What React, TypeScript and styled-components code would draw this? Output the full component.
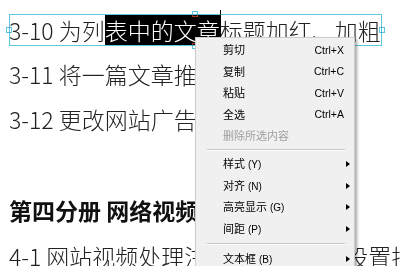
import styled, { createGlobalStyle } from "styled-components";

const GlobalStyle = createGlobalStyle`
  html, body {
    margin: 0;
    background: #ffffff;
  }
  body {
    font-family: "Noto Sans CJK SC", "Noto Sans", sans-serif;
  }
`;

type MenuEntry =
  | { kind: "item"; label: string; shortcut?: string; mnemonic?: string; submenu?: boolean; disabled?: boolean }
  | { kind: "separator" };

const menuEntries: MenuEntry[] = [
  { kind: "item", label: "剪切", shortcut: "Ctrl+X" },
  { kind: "item", label: "复制", shortcut: "Ctrl+C" },
  { kind: "item", label: "粘贴", shortcut: "Ctrl+V" },
  { kind: "item", label: "全选", shortcut: "Ctrl+A" },
  { kind: "item", label: "删除所选内容", disabled: true },
  { kind: "separator" },
  { kind: "item", label: "样式", mnemonic: "(Y)", submenu: true },
  { kind: "item", label: "对齐", mnemonic: "(N)", submenu: true },
  { kind: "item", label: "高亮显示", mnemonic: "(G)", submenu: true },
  { kind: "item", label: "间距", mnemonic: "(P)", submenu: true },
  { kind: "separator" },
  { kind: "item", label: "文本框", mnemonic: "(B)", submenu: true },
];

const Page = styled.div`
  position: relative;
  width: 400px;
  height: 266px;
  overflow: hidden;
  background: #ffffff;
`;

const Document = styled.div`
  padding: 6px 0 0 9px;
  white-space: nowrap;
`;

const Line = styled.p<{ $bold?: boolean; $spaceBefore?: boolean }>`
  margin: ${({ $spaceBefore }) => ($spaceBefore ? "45.6px 0 0" : "0")};
  font-size: 23px;
  line-height: 45.6px;
  color: ${({ $bold }) => ($bold ? "#111111" : "#222222")};
  font-weight: ${({ $bold }) => ($bold ? 700 : 300)};
`;

const Frame = styled.span`
  position: relative;
  display: inline-block;
  vertical-align: top;
  margin-top: 8px;
  height: 32px;
  line-height: 32px;
`;

const FrameBorder = styled.span`
  position: absolute;
  inset: 0 -1px 0 0;
  border: 1px solid rgb(164, 55, 31);
  mix-blend-mode: difference;
  pointer-events: none;
`;

const Handle = styled.span<{ $at: "left" | "right" | "top" | "bottom" }>`
  position: absolute;
  width: 4px;
  height: 4px;
  border: 1px solid rgb(164, 55, 31);
  mix-blend-mode: difference;
  ${({ $at }) =>
    $at === "left"
      ? "left: -3px; top: 13px;"
      : $at === "right"
      ? "right: -4px; top: 13px;"
      : $at === "top"
      ? "left: 50%; top: -3px; margin-left: -3px;"
      : "left: 50%; bottom: -3px; margin-left: -3px;"}
`;

const Highlight = styled.span`
  position: relative;
  display: inline-block;
  height: 30px;
  line-height: 30px;
  background: #000000;
  color: #ffffff;

  &::after {
    content: "";
    position: absolute;
    right: -1px;
    top: -5px;
    width: 1px;
    height: 32px;
    background: #000000;
  }
`;

const Menu = styled.div`
  position: absolute;
  left: 195px;
  top: 37px;
  width: 160px;
  box-sizing: border-box;
  padding: 1px 0;
  background: #f0f0f0;
  border: 1px solid #cdcdcd;
  box-shadow: 2px 2px 3px rgba(0, 0, 0, 0.35);
  font-family: "Noto Sans CJK SC", "Liberation Sans", sans-serif;
  font-size: 11px;
`;

const MenuItem = styled.div<{ $disabled?: boolean }>`
  display: grid;
  grid-template-columns: 1fr auto;
  align-items: center;
  height: 21.5px;
  padding: 0 4px 0 27px;
  color: ${({ $disabled }) => ($disabled ? "#a0a0a0" : "#000000")};
`;

const Label = styled.span`
  line-height: 1;
`;

const Mnemonic = styled.span`
  margin-left: 3px;
  font-family: "Liberation Sans", sans-serif;
  font-size: 10px;
`;

const Shortcut = styled.span`
  padding-right: 6px;
  font-family: "Liberation Sans", sans-serif;
  font-size: 10.5px;
`;

const SubArrow = styled.span`
  width: 0;
  height: 0;
  border-top: 3.5px solid transparent;
  border-bottom: 3.5px solid transparent;
  border-left: 4px solid #000000;
`;

const Separator = styled.div`
  height: 7px;
  display: flex;
  align-items: center;
  margin: 0 9px 0 11px;

  &::before {
    content: "";
    flex: 1;
    border-top: 1px solid #c8c8c8;
    border-bottom: 1px solid #ffffff;
  }

  & + & {
    height: 8px;
  }
`;

const LastSeparator = styled(Separator)`
  height: 9px;
`;

export default function App() {
  const lastSep = menuEntries.map((e) => e.kind).lastIndexOf("separator");
  return (
    <Page>
      <GlobalStyle />
      <Document>
        <Line>
          <Frame>
            3-10 为列<Highlight>表中的文章</Highlight>标题加红、加粗
            <FrameBorder />
            <Handle $at="left" />
            <Handle $at="right" />
            <Handle $at="top" />
            <Handle $at="bottom" />
          </Frame>
        </Line>
        <Line>3-11 将一篇文章推送到网站首页</Line>
        <Line>3-12 更改网站广告的显示位置</Line>
        <Line $bold $spaceBefore>
          第四分册 网络视频制作
        </Line>
        <Line>4-1 网站视频处理注意事项与参数设置技巧</Line>
      </Document>

      <Menu>
        {menuEntries.map((entry, i) =>
          entry.kind === "separator" ? (
            i === lastSep ? <LastSeparator key={i} /> : <Separator key={i} />
          ) : (
            <MenuItem key={i} $disabled={entry.disabled}>
              <Label>
                {entry.label}
                {entry.mnemonic && <Mnemonic>{entry.mnemonic}</Mnemonic>}
              </Label>
              {entry.shortcut && <Shortcut>{entry.shortcut}</Shortcut>}
              {entry.submenu && <SubArrow />}
            </MenuItem>
          )
        )}
      </Menu>
    </Page>
  );
}
